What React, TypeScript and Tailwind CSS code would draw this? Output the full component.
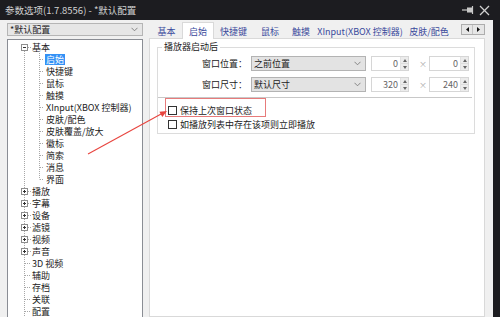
import React from 'react';

type Row = { t: string; level: 0 | 1; exp?: 'minus' | 'plus'; sel?: boolean; last?: boolean; first?: boolean };

const rows: Row[] = [
  { t: '基本', level: 0, exp: 'minus', first: true },
  { t: '启始', level: 1, sel: true },
  { t: '快捷键', level: 1 },
  { t: '鼠标', level: 1 },
  { t: '触摸', level: 1 },
  { t: 'XInput(XBOX 控制器)', level: 1 },
  { t: '皮肤/配色', level: 1 },
  { t: '皮肤覆盖/放大', level: 1 },
  { t: '徽标', level: 1 },
  { t: '简索', level: 1 },
  { t: '消息', level: 1 },
  { t: '界面', level: 1, last: true },
  { t: '播放', level: 0, exp: 'plus' },
  { t: '字幕', level: 0, exp: 'plus' },
  { t: '设备', level: 0, exp: 'plus' },
  { t: '滤镜', level: 0, exp: 'plus' },
  { t: '视频', level: 0, exp: 'plus' },
  { t: '声音', level: 0, exp: 'plus' },
  { t: '3D 视频', level: 0 },
  { t: '辅助', level: 0 },
  { t: '存档', level: 0 },
  { t: '关联', level: 0 },
  { t: '配置', level: 0 },
];

const LINE = '#a7a7a7';

function TreeRow({ r }: { r: Row }) {
  const w = r.level === 0 ? 16 : 30;
  return (
    <div className="flex h-[12px] items-center">
      <svg width={w} height={12} className="shrink-0">
        <line x1={9.5} y1={r.first ? 6 : 0} x2={9.5} y2={12} stroke={LINE} strokeDasharray="1 1" />
        {r.level === 0 && (
          <line x1={r.exp ? 13 : 10} y1={6.5} x2={16} y2={6.5} stroke={LINE} strokeDasharray="1 1" />
        )}
        {r.level === 1 && (
          <>
            <line x1={24.5} y1={0} x2={24.5} y2={r.last ? 6.5 : 12} stroke={LINE} strokeDasharray="1 1" />
            <line x1={25} y1={6.5} x2={29} y2={6.5} stroke={LINE} strokeDasharray="1 1" />
          </>
        )}
        {r.exp && (
          <>
            <rect x={6.5} y={3.5} width={6} height={6} fill="#fff" stroke="#8e8e8e" />
            <line x1={8} y1={6.5} x2={11} y2={6.5} stroke="#333" />
            {r.exp === 'plus' && <line x1={9.5} y1={5} x2={9.5} y2={8} stroke="#333" />}
          </>
        )}
      </svg>
      <span
        className={
          'whitespace-nowrap text-[9px] leading-[11px] px-[1px] ' +
          (r.sel ? 'bg-[#3391f5] text-white' : 'text-[#222]')
        }
      >
        {r.t}
      </span>
    </div>
  );
}

const tabs = [
  { t: '基本', w: 'w-[31px]' },
  { t: '启始', w: 'w-[32px]', sel: true },
  { t: '快捷键', w: 'w-[39px]' },
  { t: '鼠标', w: 'w-[34px]' },
  { t: '触摸', w: 'w-[28px]' },
  { t: 'XInput(XBOX 控制器)', w: 'w-[90px]' },
  { t: '皮肤/配色', w: 'w-[48px]' },
];

function Chevron() {
  return (
    <svg width="7" height="5" viewBox="0 0 7 5">
      <polyline points="0.5,0.8 3.5,3.8 6.5,0.8" fill="none" stroke="#7a7a7a" strokeWidth="0.9" />
    </svg>
  );
}

function Select({ text }: { text: string }) {
  return (
    <div className="flex h-[15px] w-[115px] items-center justify-between border border-[#b3b3b3] bg-[#e3e3e3] pl-[2px] pr-[4px]">
      <span className="text-[9px] leading-[11px] text-[#222]">{text}</span>
      <Chevron />
    </div>
  );
}

function Spin({ v, w }: { v: string; w: string }) {
  return (
    <div className={'flex h-[15px] border border-[#d6d6d6] bg-white ' + w}>
      <div className="flex-1 pr-[2px] text-right text-[9px] leading-[13px] text-[#666]">{v}</div>
      <div className="flex w-[8px] flex-col border-l border-[#e2e2e2] bg-[#ececec]">
        <div className="flex flex-1 items-center justify-center border-b border-[#dcdcdc]">
          <svg width="4" height="3"><polygon points="0,3 2,0 4,3" fill="#666" /></svg>
        </div>
        <div className="flex flex-1 items-center justify-center">
          <svg width="4" height="3"><polygon points="0,0 4,0 2,3" fill="#666" /></svg>
        </div>
      </div>
    </div>
  );
}

function Check({ text }: { text: string }) {
  return (
    <div className="flex h-[14px] items-center pl-[10px]">
      <div className="h-[9px] w-[9px] border border-[#333] bg-white" />
      <span className="ml-[3px] whitespace-nowrap text-[9px] leading-[11px] text-[#222]">{text}</span>
    </div>
  );
}

export default function App() {
  return (
    <div className="relative flex h-[317px] w-[500px] flex-col overflow-hidden bg-[#1c1c20] font-['Noto_Sans_CJK_SC','Noto_Sans',sans-serif]">
      {/* title bar */}
      <div className="flex h-[20px] shrink-0 items-center pl-[5px] pr-[10px]">
        <span className="text-[9.5px] leading-[12px] text-[#d2d2d2]">参数选项(1.7.8556) - *默认配置</span>
        <div className="ml-auto flex items-center gap-[4px]">
          <svg width="14" height="10" viewBox="0 0 14 10">
            <line x1="1" y1="5" x2="6" y2="5" stroke="#c8c8c8" strokeWidth="1.2" />
            <rect x="6" y="2.5" width="5" height="5" fill="#c8c8c8" />
            <line x1="11.5" y1="1" x2="11.5" y2="9" stroke="#c8c8c8" strokeWidth="1.2" />
          </svg>
          <svg width="11" height="11" viewBox="0 0 11 11">
            <line x1="1" y1="1" x2="10" y2="10" stroke="#d0d0d0" strokeWidth="1.3" />
            <line x1="10" y1="1" x2="1" y2="10" stroke="#d0d0d0" strokeWidth="1.3" />
          </svg>
        </div>
      </div>

      {/* body */}
      <div className="flex min-h-0 flex-1">
        <div className="flex w-[493px] shrink-0 gap-[6px] bg-[#f0f0f0] pl-[7px] pt-[2px]">
          {/* left column */}
          <div className="flex w-[136px] shrink-0 flex-col">
            <div className="mt-[1px] flex h-[15px] items-center justify-between border border-[#b5b5b5] bg-[#e6e6e6] pl-[2px] pr-[4px]">
              <span className="text-[9px] leading-[11px] text-[#222]">*默认配置</span>
              <Chevron />
            </div>
            <div className="mt-[3px] flex-1 border border-[#8a8d94] bg-white pl-[7px] pt-[1px]">
              {rows.map((r, i) => (
                <TreeRow key={i} r={r} />
              ))}
            </div>
          </div>

          {/* right column */}
          <div className="flex w-[336px] shrink-0 flex-col">
            <div className="flex h-[16px] items-end pl-[2px]">
              {tabs.map((t, i) =>
                t.sel ? (
                  <div
                    key={i}
                    className={
                      'relative z-10 -mb-px flex h-[17px] items-center justify-center border border-b-0 border-[#d9d9d9] bg-white ' +
                      t.w
                    }
                  >
                    <span className="whitespace-nowrap text-[9px] leading-[11px] text-[#3a4a9c]">{t.t}</span>
                  </div>
                ) : (
                  <div key={i} className={'flex h-[14px] items-center justify-center ' + t.w}>
                    <span className="whitespace-nowrap text-[9px] leading-[11px] text-[#3a4a9c]">{t.t}</span>
                  </div>
                )
              )}
              <div className="mb-[3px] ml-auto flex h-[11px] border border-[#adadad] bg-[#e6e6e6]">
                <div className="flex w-[11px] items-center justify-center border-r border-[#c4c4c4]">
                  <svg width="3" height="5"><polygon points="3,0 3,5 0,2.5" fill="#111" /></svg>
                </div>
                <div className="flex w-[11px] items-center justify-center">
                  <svg width="3" height="5"><polygon points="0,0 0,5 3,2.5" fill="#111" /></svg>
                </div>
              </div>
            </div>

            <div className="flex-1 border border-[#d9d9d9] bg-white">
              <fieldset className="ml-[7px] mr-[9px] mt-[2px] border border-[#dcdcdc] pb-[2px] pt-[3px]">
                <legend className="ml-[4px] px-[2px] text-[9px] leading-[12px] text-[#222]">播放器启动后</legend>
                <div className="flex flex-col gap-[6px]">
                  <div className="flex items-center">
                    <span className="w-[90px] pr-[1px] text-right text-[9px] leading-[11px] text-[#222]">窗口位置：</span>
                    <div className="ml-[3px]"><Select text="之前位置" /></div>
                    <div className="ml-[5px]"><Spin v="0" w="w-[38px]" /></div>
                    <span className="w-[20px] pl-[10px] text-[8px] leading-[10px] text-[#aaa]">×</span>
                    <Spin v="0" w="w-[40px]" />
                  </div>
                  <div className="flex items-center">
                    <span className="w-[90px] pr-[1px] text-right text-[9px] leading-[11px] text-[#222]">窗口尺寸：</span>
                    <div className="ml-[3px]"><Select text="默认尺寸" /></div>
                    <div className="ml-[5px]"><Spin v="320" w="w-[38px]" /></div>
                    <span className="w-[20px] pl-[10px] text-[8px] leading-[10px] text-[#aaa]">×</span>
                    <Spin v="240" w="w-[40px]" />
                  </div>
                </div>
                <div className="mr-[2px] mt-[5px] h-[1px] bg-[#c8c8c8]" />
                <div className="mt-[5px]">
                  <Check text="保持上次窗口状态" />
                  <Check text="如播放列表中存在该项则立即播放" />
                </div>
              </fieldset>
            </div>
          </div>
        </div>
        <div className="flex-1" />
      </div>

      {/* annotation overlays */}
      <div className="pointer-events-none absolute left-[165px] top-[98px] h-[19px] w-[101px] border border-[#e77b7b]" />
      <svg className="pointer-events-none absolute left-0 top-0" width="500" height="317">
        <line x1="88" y1="154" x2="162" y2="113.5" stroke="#e8453f" strokeWidth="1.1" />
        <polygon points="167,111 162.3,117 159.4,111.7" fill="#e8453f" />
      </svg>
    </div>
  );
}
